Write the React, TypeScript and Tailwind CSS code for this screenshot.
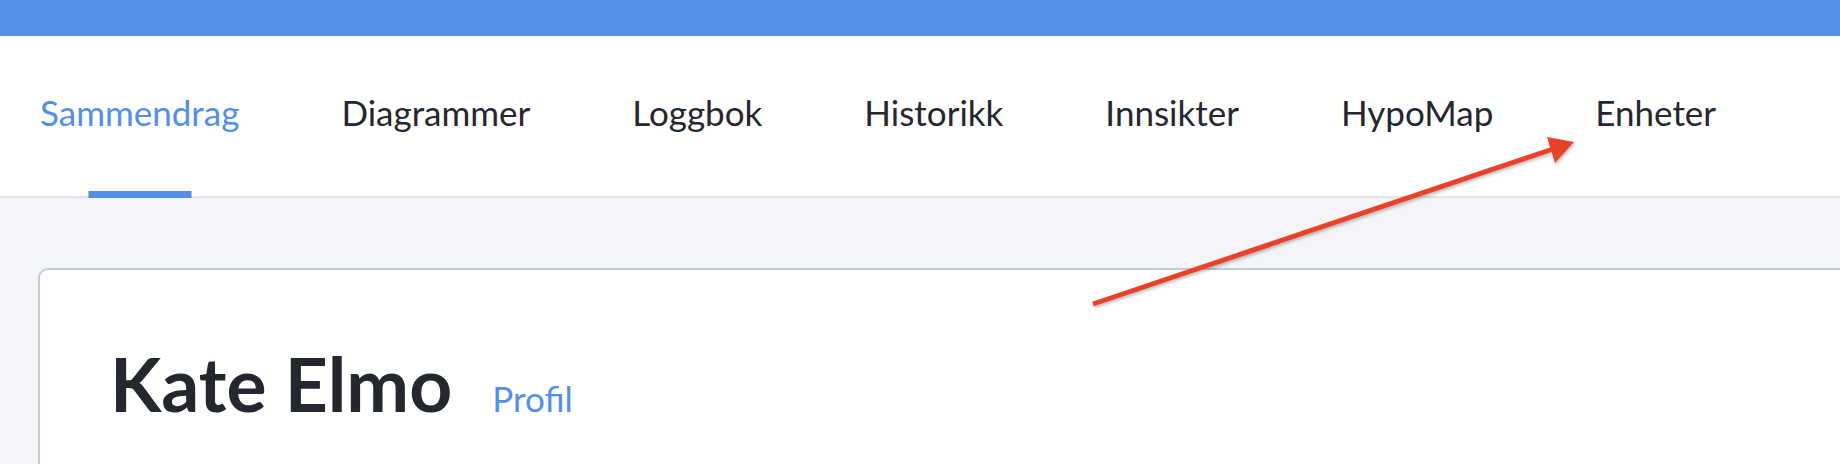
import React from "react";

const tabs = ["Sammendrag", "Diagrammer", "Loggbok", "Historikk", "Innsikter", "HypoMap", "Enheter"];

const Arrow = () => (
  <svg
    className="absolute left-0 top-0 pointer-events-none"
    width="1840"
    height="464"
    viewBox="0 0 1840 464"
  >
    <defs>
      <filter id="sh" x="-10%" y="-10%" width="120%" height="120%">
        <feDropShadow dx="1" dy="2" stdDeviation="1.5" floodColor="#000" floodOpacity="0.25" />
      </filter>
    </defs>
    <g filter="url(#sh)">
      <line x1="1093" y1="304" x2="1553" y2="149" stroke="#e9432b" strokeWidth="5" />
      <polygon points="1574,142 1547,137 1555,163" fill="#e9432b" />
    </g>
  </svg>
);

export default function App() {
  return (
    <div className="relative w-full h-[464px] overflow-hidden bg-[#f4f5f9] font-['Lato',sans-serif]">
      <div className="h-[36px] bg-[#528fe9]" />

      <nav className="h-[162px] bg-white border-b-2 border-[#e3e4e7]">
        <ul className="flex h-full pl-[40px] gap-[102px]">
          {tabs.map((t, i) => (
            <li key={t} className="relative flex items-center h-full pb-[7px]">
              <span
                className={
                  "text-[35px] leading-none " + (i === 0 ? "text-[#528fe9]" : "text-[#24272d]")
                }
              >
                {t}
              </span>
              {i === 0 && (
                <span className="absolute left-1/2 -translate-x-1/2 bottom-[-2px] w-[103px] h-[7px] bg-[#528fe9]" />
              )}
            </li>
          ))}
        </ul>
      </nav>

      <main className="pl-[38px] pt-[70px]">
        <div className="bg-white border-2 border-[#c3c8d2] rounded-[10px] mr-[-20px] h-[260px] pl-[70px] pt-[57px]">
          <div className="flex items-baseline gap-[40px]">
            <h1 className="text-[75px] font-bold text-[#24272d]">Kate Elmo</h1>
            <a className="text-[35px] text-[#528fe9]">Profil</a>
          </div>
        </div>
      </main>

      <Arrow />
    </div>
  );
}
